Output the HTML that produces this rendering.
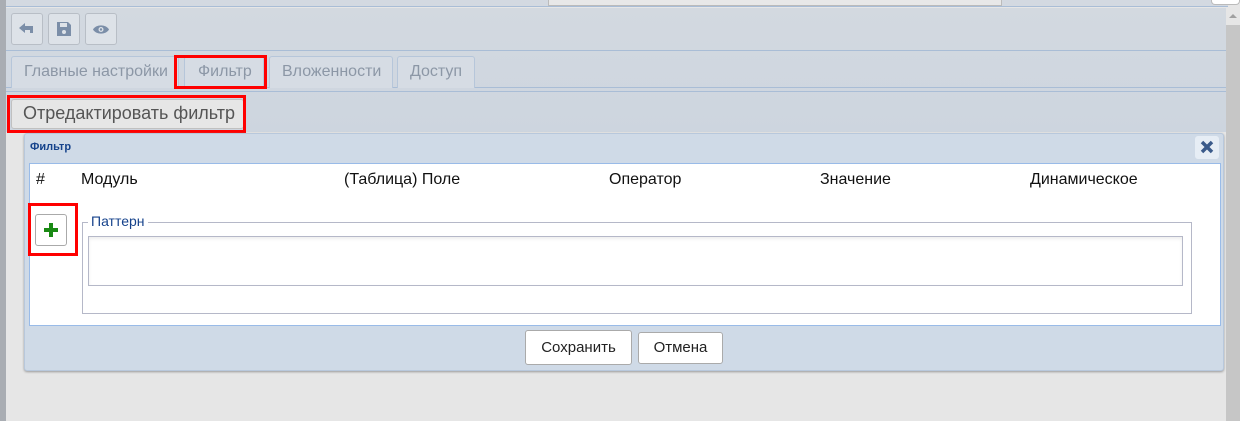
<!DOCTYPE html>
<html><head><meta charset="utf-8"><style>
*{box-sizing:border-box;margin:0;padding:0}
body{width:1240px;height:421px;overflow:hidden;background:#e6e6e6;font-family:"Liberation Sans",sans-serif;position:relative}
.a{position:absolute}
</style></head><body>
<div class="a" style="left:0;top:0;width:6px;height:421px;background:#a9adb3"></div>
<div class="a" style="left:6px;top:0;width:1222px;height:7px;background:#d3d9e1;border-bottom:1px solid #a9bdd6"></div>
<div class="a" style="left:548px;top:0;width:454px;height:6px;background:#e8e8e8;border:1px solid #bbb;border-top:none"></div>
<div class="a" style="left:1211px;top:0;width:29px;height:5px;background:#fff;border:1px solid #bbb;border-top:none;border-radius:0 0 4px 4px"></div>
<div class="a" style="left:6px;top:8px;width:1220px;height:124px;background:linear-gradient(#d3d9e0,#cdd5df)"></div>
<div class="a" style="left:6px;top:50px;width:1220px;height:1px;background:#a9bdd6"></div>
<div class="a" style="left:6px;top:87px;width:1220px;height:1px;background:#a9bdd6"></div>
<div class="a" style="left:6px;top:91px;width:1220px;height:1px;background:#a9bdd6"></div>
<div class="a" style="left:11px;top:13px;width:32px;height:32px;border:1px solid #b8bec6;border-radius:3px;background:#dde2e8"></div>
<svg class="a" style="left:18px;top:22px" width="18" height="14" viewBox="0 0 18 14"><path d="M1 6 L7 1 V4 H15 V11 H12 V8 H7 V11 Z" fill="#7b8ea8"/></svg>
<div class="a" style="left:48px;top:13px;width:32px;height:32px;border:1px solid #b8bec6;border-radius:3px;background:#dde2e8"></div>
<svg class="a" style="left:56px;top:21px" width="16" height="16" viewBox="0 0 16 16"><path d="M1 1H12L15 4V15H1Z" fill="#7b8ea8"/><rect x="4" y="2" width="7" height="4" fill="#dde2e8"/><circle cx="8" cy="11" r="2" fill="#dde2e8"/></svg>
<div class="a" style="left:85px;top:13px;width:32px;height:32px;border:1px solid #b8bec6;border-radius:3px;background:#dde2e8"></div>
<svg class="a" style="left:92px;top:24px" width="18" height="11" viewBox="0 0 18 11"><path d="M1 5.5C4 0 14 0 17 5.5C14 11 4 11 1 5.5Z" fill="#7b8ea8"/><circle cx="9" cy="5.5" r="2.5" fill="#dde2e8"/><circle cx="9" cy="5.5" r="1.2" fill="#7b8ea8"/></svg>
<div class="a" style="left:11px;top:56px;width:168px;height:32px;border:1px solid #b6c6da;border-bottom:none;border-radius:3px 3px 0 0;background:#d6dce4;color:#8c97a6;font-size:16px;padding:6px 0 0 12px">Главные настройки</div>
<div class="a" style="left:184px;top:56px;width:80px;height:32px;border:1px solid #b6c6da;border-bottom:none;border-radius:3px 3px 0 0;background:#d6dce4;color:#8c97a6;font-size:16px;padding:6px 0 0 13px">Фильтр</div>
<div class="a" style="left:174px;top:55px;width:93px;height:34px;border:3px solid #f00"></div>
<div class="a" style="left:269px;top:56px;width:124px;height:32px;border:1px solid #b6c6da;border-bottom:none;border-radius:3px 3px 0 0;background:#d6dce4;color:#8c97a6;font-size:16px;padding:6px 0 0 12px">Вложенности</div>
<div class="a" style="left:397px;top:56px;width:78px;height:32px;border:1px solid #b6c6da;border-bottom:none;border-radius:3px 3px 0 0;background:#d6dce4;color:#8c97a6;font-size:16px;padding:6px 0 0 12px">Доступ</div>
<div class="a" style="left:11px;top:99px;width:233px;height:30px;border:1px solid #c0c0c0;border-radius:3px;background:#e6e6e6;color:#555;font-size:18px;padding:3px 0 0 11px">Отредактировать фильтр</div>
<div class="a" style="left:7px;top:95px;width:239px;height:38px;border:3px solid #f00"></div>
<div class="a" style="left:1226px;top:8px;width:14px;height:413px;background:#c6c6c6"></div>
<div class="a" style="left:1226px;top:8px;width:14px;height:17px;background:#e6e6e6"></div>
<div class="a" style="left:1229px;top:14px;width:0;height:0;border-left:4px solid transparent;border-right:4px solid transparent;border-bottom:4px solid #a0a0a0"></div>
<div class="a" style="left:24px;top:133px;width:1200px;height:238px;background:#cfdae7;border:1px solid #b8c8dc;border-radius:3px;box-shadow:0 1px 2px #999"></div>
<div class="a" style="left:30px;top:141px;font-size:11px;font-weight:bold;color:#15428b">Фильтр</div>
<div class="a" style="left:1195px;top:136px;width:24px;height:23px;background:#e6edf5;border-radius:3px"></div>
<svg class="a" style="left:1200px;top:140px" width="14" height="14" viewBox="0 0 14 14"><path d="M2 2L12 12M12 2L2 12" stroke="#3a5a8a" stroke-width="3.5"/></svg>
<div class="a" style="left:29px;top:163px;width:1192px;height:163px;background:#fff;border:1px solid #99bbe8"></div>
<div class="a" style="left:36px;top:171px;font-size:16px;color:#111">#</div>
<div class="a" style="left:81px;top:171px;font-size:16px;color:#111">Модуль</div>
<div class="a" style="left:344px;top:171px;font-size:16px;color:#111">(Таблица) Поле</div>
<div class="a" style="left:609px;top:171px;font-size:16px;color:#111">Оператор</div>
<div class="a" style="left:820px;top:171px;font-size:16px;color:#111">Значение</div>
<div class="a" style="left:1030px;top:171px;font-size:16px;color:#111">Динамическое</div>
<div class="a" style="left:35px;top:214px;width:32px;height:32px;border:1px solid #aaa;border-radius:3px;background:#fff"></div>
<svg class="a" style="left:43px;top:222px" width="16" height="16" viewBox="0 0 16 16"><path d="M8 1V15M1 8H15" stroke="#1a8a14" stroke-width="4"/></svg>
<div class="a" style="left:28px;top:203px;width:50px;height:53px;border:3px solid #f00"></div>
<div class="a" style="left:82px;top:222px;width:1110px;height:92px;border:1px solid #b5b8c8"></div>
<div class="a" style="left:88px;top:213px;background:#fff;padding:0 3px;font-size:14px;color:#15428b">Паттерн</div>
<div class="a" style="left:88px;top:236px;width:1095px;height:50px;border:1px solid #b5b8c8;box-shadow:inset 0 2px 3px #eee"></div>
<div class="a" style="left:525px;top:330px;width:107px;height:35px;border:1px solid #aaa;border-radius:3px;background:#fff;font-size:15px;color:#222;text-align:center;line-height:33px">Сохранить</div>
<div class="a" style="left:638px;top:332px;width:85px;height:32px;border:1px solid #aaa;border-radius:3px;background:#fff;font-size:15px;color:#222;text-align:center;line-height:30px">Отмена</div>
</body></html>
